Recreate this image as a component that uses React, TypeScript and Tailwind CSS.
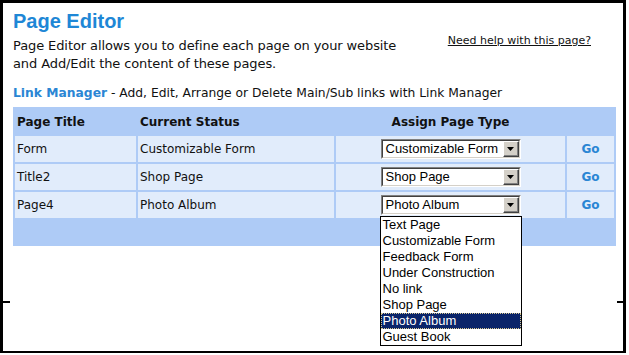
import React from "react";

const OPTIONS = [
  "Text Page",
  "Customizable Form",
  "Feedback Form",
  "Under Construction",
  "No link",
  "Shop Page",
  "Photo Album",
  "Guest Book",
];

function Select({ value, open }: { value: string; open?: boolean }) {
  return (
    <div className="relative">
      <div className="w-[140px] h-[20px] border border-t-[#808080] border-l-[#808080] border-b-[#ffffff] border-r-[#ffffff]">
        <div className="flex items-center h-full bg-white border border-t-[#404040] border-l-[#404040] border-b-[#d4d0c8] border-r-[#d4d0c8] font-['Liberation_Sans',Arial,sans-serif] text-[13px] text-black">
          <span className="flex-1 pl-[3px] leading-[16px] whitespace-nowrap overflow-hidden">{value}</span>
          <div className="w-[16px] h-[16px] bg-[#d4d0c8] border border-t-[#ffffff] border-l-[#ffffff] border-b-[#404040] border-r-[#404040] shadow-[inset_-1px_-1px_0_#808080] flex items-center justify-center">
            <svg width="7" height="4" viewBox="0 0 7 4">
              <path d="M0 0H7L3.5 4Z" fill="#000" />
            </svg>
          </div>
        </div>
      </div>
      {open && (
        <div className="absolute left-[-1px] top-[21px] w-[142px] bg-white border border-black font-['Liberation_Sans',Arial,sans-serif] text-[13px] text-black z-10">
          {OPTIONS.map((o) =>
            o === value ? (
              <div
                key={o}
                className="h-[16px] leading-[14px] pl-[1px] bg-[#0a246a] text-white border border-dotted border-[#d8c890] whitespace-nowrap"
              >
                {o}
              </div>
            ) : (
              <div key={o} className="h-[16px] leading-[16px] pl-[2px] whitespace-nowrap">
                {o}
              </div>
            )
          )}
        </div>
      )}
    </div>
  );
}

const ROWS = [
  { title: "Form", status: "Customizable Form", type: "Customizable Form" },
  { title: "Title2", status: "Shop Page", type: "Shop Page" },
  { title: "Page4", status: "Photo Album", type: "Photo Album", open: true },
];

export default function App() {
  return (
    <div className="relative w-[629px] h-[355px] bg-white font-['DejaVu_Sans',Verdana,sans-serif] text-[12px] text-[#111]">
      <div className="w-[626px] h-[353px] border-black border-t-[3px] border-l-[3px] border-r-[3px] border-b-[2px] pl-[10px] pr-[7px] pt-[7px]">
        <h1 className="font-['Liberation_Sans',Arial,sans-serif] font-bold text-[20px] leading-[23px] text-[#1e87d6]">
          Page Editor
        </h1>
        <div className="flex items-start mt-[1px]">
          <p className="leading-[18px] mt-[3px] text-[13px] tracking-[-0.1px]">
            Page Editor allows you to define each page on your website
            <br />
            and Add/Edit the content of these pages.
          </p>
          <a className="ml-auto mr-[25px] text-[11px] leading-[14px] underline text-[#111]">
            Need help with this page?
          </a>
        </div>
        <p className="leading-[18px] mt-[11px] text-[12.3px]">
          <span className="font-bold text-[#2a86d4]">Link Manager</span> - Add, Edit, Arrange or Delete
          Main/Sub links with Link Manager
        </p>
        <table className="mt-[5px] w-[603px] bg-[#aecbf6] border-separate border-spacing-[2px] table-fixed">
          <colgroup>
            <col className="w-[121px]" />
            <col className="w-[196px]" />
            <col className="w-[229px]" />
            <col className="w-[47px]" />
          </colgroup>
          <thead>
            <tr className="h-[25px]">
              <th className="text-left font-bold px-[2px]">Page Title</th>
              <th className="text-left font-bold px-[2px]">Current Status</th>
              <th className="text-center font-bold">Assign Page Type</th>
              <th></th>
            </tr>
          </thead>
          <tbody>
            {ROWS.map((r) => (
              <tr key={r.title} className="h-[26px]">
                <td className="bg-[#e1ecfb] px-[2px]">{r.title}</td>
                <td className="bg-[#e1ecfb] px-[2px]">{r.status}</td>
                <td className="bg-[#e1ecfb] p-0">
                  <div className="flex justify-center">
                    <Select value={r.type} open={r.open} />
                  </div>
                </td>
                <td className="bg-[#e1ecfb] text-center font-bold text-[#2a86d4]">Go</td>
              </tr>
            ))}
            <tr className="h-[24px]">
              <td colSpan={4}></td>
            </tr>
          </tbody>
        </table>
      </div>
      <div className="absolute left-0 top-[301px] w-[10px] h-[2px] bg-black" />
      <div className="absolute left-[617px] top-[301px] w-[9px] h-[2px] bg-black" />
    </div>
  );
}
